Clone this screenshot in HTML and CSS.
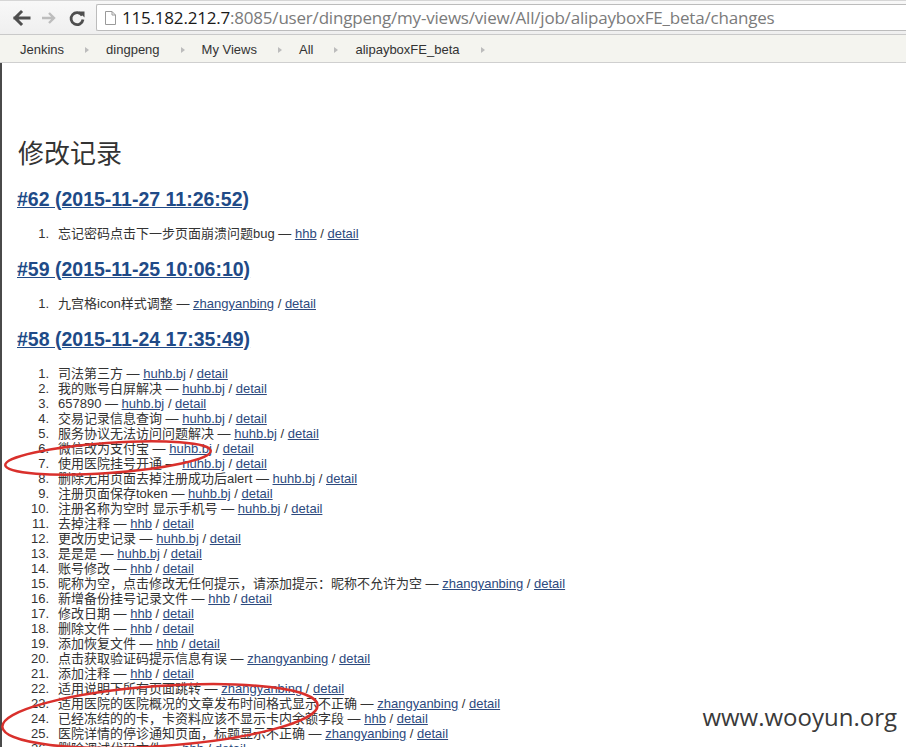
FILE: index.html
```html
<!DOCTYPE html>
<html lang="zh-CN">
<head>
<meta charset="utf-8">
<title>Changes</title>
<link rel="stylesheet" href="styles.css">
</head>
<body>
<div class="toolbar">
  <span class="nav back"><svg width="20" height="18" viewBox="0 0 20 18"><path d="M18 9H4M10 3L4 9l6 6" fill="none" stroke="#4e4e4e" stroke-width="3" stroke-linecap="square"/></svg></span>
  <span class="nav fwd"><svg width="18" height="18" viewBox="0 0 18 18"><path d="M2 9h12M9 4l5 5-5 5" fill="none" stroke="#bdbdbd" stroke-width="2.4"/></svg></span>
  <span class="nav reload"><svg width="18" height="18" viewBox="0 0 18 18"><path d="M14.2 6.5A6 6 0 1 0 15 10.5" fill="none" stroke="#4e4e4e" stroke-width="2.8"/><path d="M10.5 2.5h6v6z" fill="#4e4e4e"/></svg></span>
  <div class="urlbox">
    <svg class="pageicon" width="11" height="14" viewBox="0 0 11 14"><path d="M.5.5h6.5l3.5 3.5v9.5h-10z M7 .5V4h3.5" fill="#fff" stroke="#9a9a9a"/></svg>
    <span class="url"><span class="host">115.182.212.7</span>:8085/user/dingpeng/my-views/view/All/job/alipayboxFE_beta/changes</span>
  </div>
</div>
<div class="crumbs">
  <span class="crumb">Jenkins</span><span class="sep"></span>
  <span class="crumb">dingpeng</span><span class="sep"></span>
  <span class="crumb">My Views</span><span class="sep"></span>
  <span class="crumb">All</span><span class="sep"></span>
  <span class="crumb">alipayboxFE_beta</span><span class="sep"></span>
</div>
<div class="page">
  <h1>修改记录</h1>
  <h2><a href="#">#62 (2015-11-27 11:26:52)</a></h2>
  <ol>
    <li>忘记密码点击下一步页面崩溃问题bug — <a href="#">hhb</a> / <a href="#">detail</a></li>
  </ol>
  <h2><a href="#">#59 (2015-11-25 10:06:10)</a></h2>
  <ol>
    <li>九宫格icon样式调整 — <a href="#">zhangyanbing</a> / <a href="#">detail</a></li>
  </ol>
  <h2><a href="#">#58 (2015-11-24 17:35:49)</a></h2>
  <ol>
    <li>司法第三方 — <a href="#">huhb.bj</a> / <a href="#">detail</a></li>
    <li>我的账号白屏解决 — <a href="#">huhb.bj</a> / <a href="#">detail</a></li>
    <li>657890 — <a href="#">huhb.bj</a> / <a href="#">detail</a></li>
    <li>交易记录信息查询 — <a href="#">huhb.bj</a> / <a href="#">detail</a></li>
    <li>服务协议无法访问问题解决 — <a href="#">huhb.bj</a> / <a href="#">detail</a></li>
    <li>微信改为支付宝 — <a href="#">huhb.bj</a> / <a href="#">detail</a></li>
    <li>使用医院挂号开通 — <a href="#">huhb.bj</a> / <a href="#">detail</a></li>
    <li>删除无用页面去掉注册成功后alert — <a href="#">huhb.bj</a> / <a href="#">detail</a></li>
    <li>注册页面保存token — <a href="#">huhb.bj</a> / <a href="#">detail</a></li>
    <li>注册名称为空时 显示手机号 — <a href="#">huhb.bj</a> / <a href="#">detail</a></li>
    <li>去掉注释 — <a href="#">hhb</a> / <a href="#">detail</a></li>
    <li>更改历史记录 — <a href="#">huhb.bj</a> / <a href="#">detail</a></li>
    <li>是是是 — <a href="#">huhb.bj</a> / <a href="#">detail</a></li>
    <li>账号修改 — <a href="#">hhb</a> / <a href="#">detail</a></li>
    <li>昵称为空，点击修改无任何提示，请添加提示：昵称不允许为空 — <a href="#">zhangyanbing</a> / <a href="#">detail</a></li>
    <li>新增备份挂号记录文件 — <a href="#">hhb</a> / <a href="#">detail</a></li>
    <li>修改日期 — <a href="#">hhb</a> / <a href="#">detail</a></li>
    <li>删除文件 — <a href="#">hhb</a> / <a href="#">detail</a></li>
    <li>添加恢复文件 — <a href="#">hhb</a> / <a href="#">detail</a></li>
    <li>点击获取验证码提示信息有误 — <a href="#">zhangyanbing</a> / <a href="#">detail</a></li>
    <li>添加注释 — <a href="#">hhb</a> / <a href="#">detail</a></li>
    <li>适用说明下所有页面跳转 — <a href="#">zhangyanbing</a> / <a href="#">detail</a></li>
    <li>适用医院的医院概况的文章发布时间格式显示不正确 — <a href="#">zhangyanbing</a> / <a href="#">detail</a></li>
    <li>已经冻结的的卡，卡资料应该不显示卡内余额字段 — <a href="#">hhb</a> / <a href="#">detail</a></li>
    <li>医院详情的停诊通知页面，标题显示不正确 — <a href="#">zhangyanbing</a> / <a href="#">detail</a></li>
    <li>删除调试代码文件 — <a href="#">hhb</a> / <a href="#">detail</a></li>
  </ol>
</div>
<div class="watermark">www.wooyun.org</div>
<svg class="marks" width="906" height="747" viewBox="0 0 906 747">
  <ellipse cx="108" cy="458" rx="103" ry="15" transform="rotate(-4 108 458)" fill="none" stroke="#d9302c" stroke-width="2.5"/>
  <ellipse cx="160" cy="716" rx="158" ry="30" transform="rotate(-4 160 716)" fill="none" stroke="#d9302c" stroke-width="2.5"/>
</svg>
</body>
</html>
```

FILE: styles.css
```css
html, body {
  margin: 0;
  padding: 0;
}
body {
  width: 906px;
  height: 747px;
  overflow: hidden;
  position: relative;
  background: #fff;
  font-family: "Liberation Sans", Arial, "Noto Sans CJK SC", sans-serif;
  color: #333;
}
.toolbar {
  height: 35px;
  box-sizing: border-box;
  display: flex;
  align-items: center;
  background: linear-gradient(#f8f8f8, #efefef);
  border-top: 1px solid #d6d6d6;
  border-bottom: 1px solid #c9c9c9;
}
.nav {
  display: flex;
  align-items: center;
  justify-content: center;
}
.back { margin-left: 11px; width: 20px; }
.fwd { margin-left: 9px; width: 18px; }
.reload { margin-left: 10px; width: 18px; }
.urlbox {
  margin-left: 10px;
  flex: 1;
  height: 27px;
  box-sizing: border-box;
  border: 1px solid #bcbcbc;
  border-right: none;
  border-radius: 2px 0 0 2px;
  background: #fff;
  display: flex;
  align-items: center;
  padding-left: 8px;
}
.pageicon { flex: none; }
.url {
  margin-left: 6px;
  font-family: "Open Sans", "Noto Sans", sans-serif;
  font-size: 17px;
  color: #7b7b7b;
  white-space: nowrap;
  letter-spacing: -0.2px;
}
.host { color: #1a1a1a; }
.crumbs {
  height: 28px;
  box-sizing: border-box;
  display: flex;
  align-items: center;
  background: #f4f4ef;
  border-bottom: 1px solid #cfcfcf;
  padding: 2px 0 0 20px;
  font-size: 13px;
  color: #333;
}
.sep {
  width: 0;
  height: 0;
  border-left: 4px solid #bcbcbc;
  border-top: 3.5px solid transparent;
  border-bottom: 3.5px solid transparent;
  margin: 0 17px 0 21px;
}
.page {
  border-left: 2px solid #4a4a4a;
  padding-left: 16px;
  height: 700px;
  overflow: hidden;
}
h1 {
  margin: 0;
  padding-top: 74px;
  font-family: "Noto Sans CJK SC", sans-serif;
  font-weight: normal;
  font-size: 26px;
  line-height: 30px;
  color: #333;
}
h2 {
  margin: 20px 0 0 -1px;
  font-size: 19.5px;
  line-height: 24px;
  font-weight: bold;
}
h2 a {
  color: #204a87;
}
ol {
  list-style: none;
  counter-reset: item;
  margin: 15px 0 0;
  padding-left: 40px;
  font-size: 13px;
  line-height: 15px;
}
ol + h2 { margin-top: 16px; }
li {
  counter-increment: item;
  white-space: nowrap;
}
li::before {
  content: counter(item) ".";
  display: inline-block;
  width: 31px;
  margin-left: -40px;
  margin-right: 9px;
  text-align: right;
}
li a {
  color: #2d4a7e;
}
.watermark {
  position: absolute;
  right: 9px;
  bottom: 14px;
  font-family: "Open Sans", "Noto Sans", sans-serif;
  font-size: 24px;
  color: #3a3a3a;
  background: #fff;
  padding-left: 6px;
}
.marks {
  position: absolute;
  left: 0;
  top: 0;
  pointer-events: none;
}
```
